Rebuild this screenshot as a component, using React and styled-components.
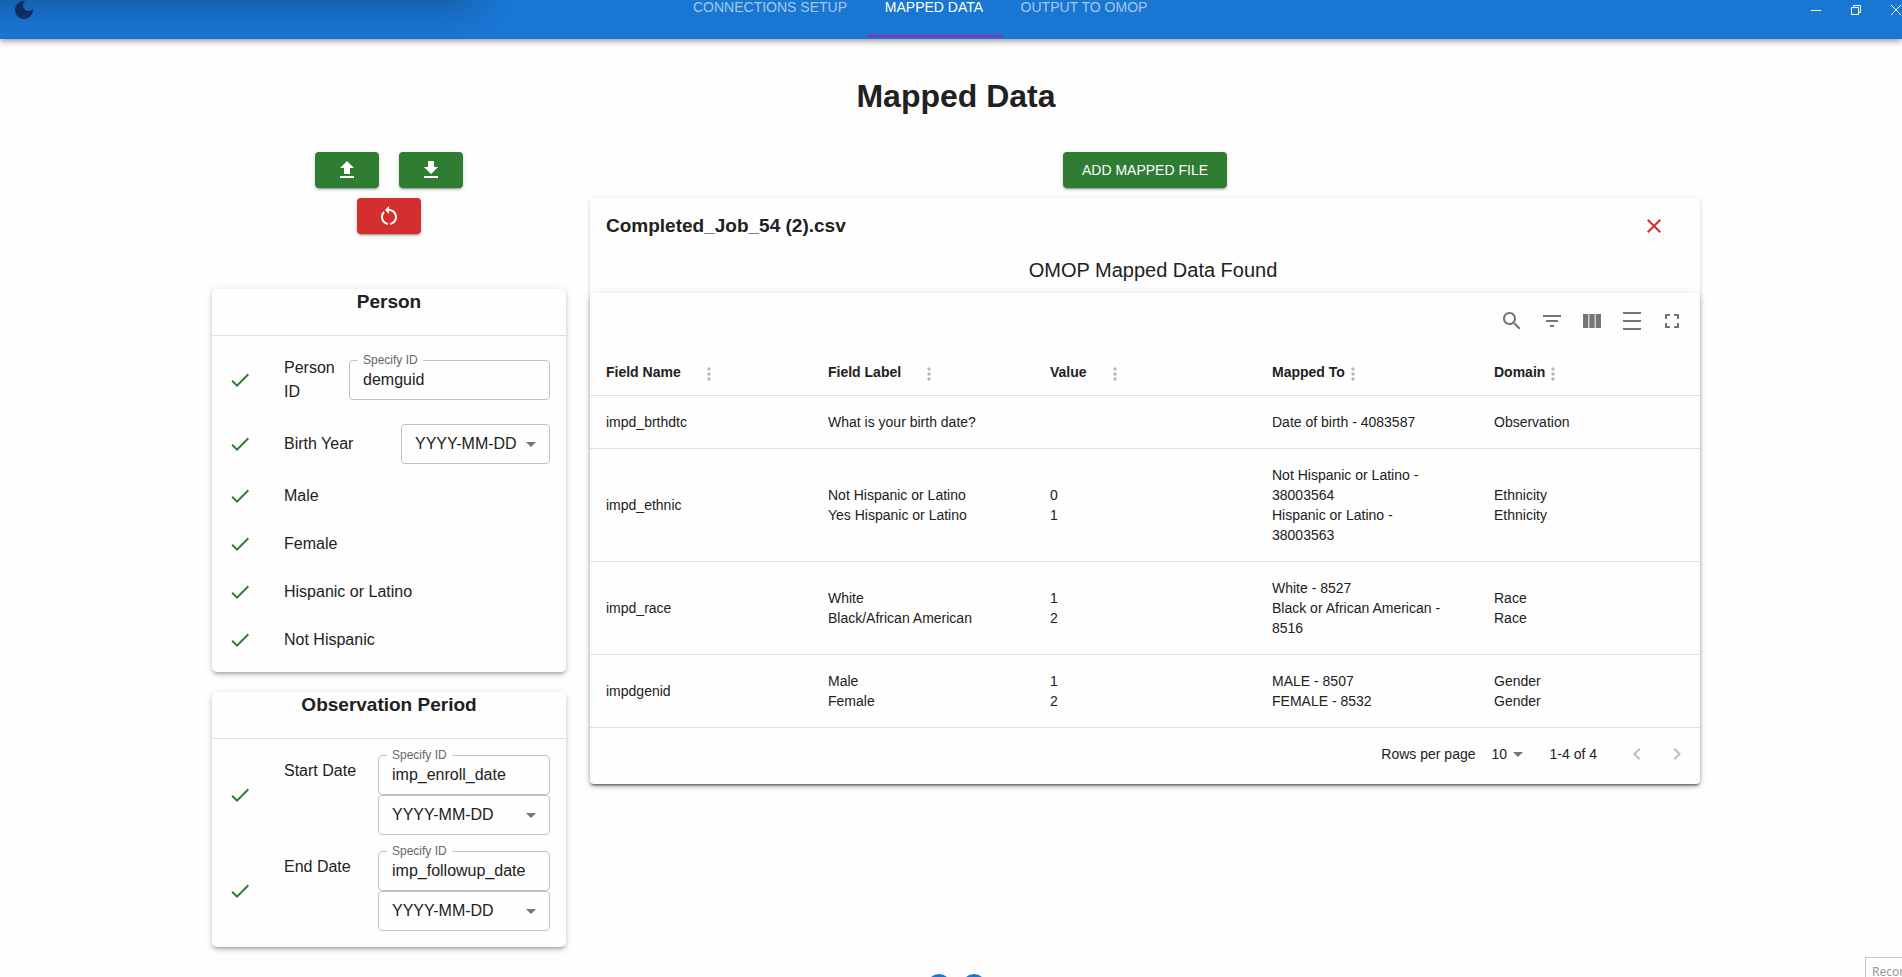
import React from 'react';
import styled, { createGlobalStyle, css } from 'styled-components';

const SURFACE = '#fefefe';
const TEXT = '#212121';
const LINE = '#dfdfdf';
const OUTLINE = '#c2c2c2';
const MUTED = '#757575';
const FONT = '"Liberation Sans", Arial, sans-serif';

const shadow = {
  low: '0 3px 1px -2px rgba(0,0,0,.2), 0 2px 2px 0 rgba(0,0,0,.14), 0 1px 5px 0 rgba(0,0,0,.12)',
  mid: '0 3px 3px -2px rgba(0,0,0,.2), 0 3px 4px 0 rgba(0,0,0,.14), 0 1px 8px 0 rgba(0,0,0,.12)',
  bar: '0 2px 4px -1px rgba(0,0,0,.2), 0 4px 5px 0 rgba(0,0,0,.14), 0 1px 10px 0 rgba(0,0,0,.12)',
};

const GlobalStyle = createGlobalStyle`
  *, *::before, *::after { box-sizing: border-box; }
  body { margin: 0; background: ${SURFACE}; color: ${TEXT}; font-family: ${FONT}; font-size: 16px; line-height: 24px; }
  button, input, select { font: inherit; color: inherit; margin: 0; }
  h1, h2, h3, p, ul { margin: 0; padding: 0; }
`;

/* ---------- icons ---------- */

const PATHS = {
  moon: 'M12 3c-4.97 0-9 4.03-9 9s4.03 9 9 9 9-4.03 9-9c0-.46-.04-.92-.1-1.36-.98 1.37-2.58 2.26-4.4 2.26-2.98 0-5.4-2.42-5.4-5.4 0-1.81.89-3.42 2.26-4.4-.44-.06-.9-.1-1.36-.1z',
  upload: 'M5 20h14v-2H5v2zm0-10h4v6h6v-6h4l-7-7-7 7z',
  download: 'M19 9h-4V3H9v6H5l7 7 7-7zM5 18v2h14v-2H5z',
  restart:
    'M12 5V2L8 6l4 4V7c3.31 0 6 2.69 6 6 0 2.97-2.17 5.43-5 5.91v2.02c3.95-.49 7-3.85 7-7.93 0-4.42-3.58-8-8-8zm-6 8c0-1.65.67-3.15 1.76-4.24L6.34 7.34C4.9 8.79 4 10.79 4 13c0 4.08 3.05 7.44 7 7.93v-2.02c-2.83-.48-5-2.94-5-5.91z',
  check: 'M9 16.17L4.83 12l-1.42 1.41L9 19 21 7l-1.41-1.41z',
  caret: 'M7 10l5 5 5-5z',
  close: 'M19 6.41L17.59 5 12 10.59 6.41 5 5 6.41 10.59 12 5 17.59 6.41 19 12 13.41 17.59 19 19 17.59 13.41 12z',
  search:
    'M15.5 14h-.79l-.28-.27C15.41 12.59 16 11.11 16 9.5 16 5.91 13.09 3 9.5 3S3 5.91 3 9.5 5.91 16 9.5 16c1.61 0 3.09-.59 4.23-1.57l.27.28v.79l5 4.99L20.49 19l-4.99-5zm-6 0C7.01 14 5 11.99 5 9.5S7.01 5 9.5 5 14 7.01 14 9.5 11.99 14 9.5 14z',
  filter: 'M10 18h4v-2h-4v2zM3 6v2h18V6H3zm3 7h12v-2H6v2z',
  columns: 'M14.67 5v14H9.33V5h5.34zm1 14H21V5h-5.33v14zm-7.34 0V5H3v14h5.33z',
  density: 'M3 3h18v2H3zm0 16h18v2H3zm0-8h18v2H3z',
  fullscreen: 'M7 14H5v5h5v-2H7v-3zm-2-4h2V7h3V5H5v5zm12 7h-3v2h5v-5h-2v3zM14 5v2h3v3h2V5h-5z',
  more: 'M12 8c1.1 0 2-.9 2-2s-.9-2-2-2-2 .9-2 2 .9 2 2 2zm0 2c-1.1 0-2 .9-2 2s.9 2 2 2 2-.9 2-2-.9-2-2-2zm0 6c-1.1 0-2 .9-2 2s.9 2 2 2 2-.9 2-2-.9-2-2-2z',
  left: 'M15.41 7.41L14 6l-6 6 6 6 1.41-1.41L10.83 12z',
  right: 'M10 6L8.59 7.41 13.17 12l-4.58 4.59L10 18l6-6z',
};

const Svg = styled.svg`
  display: block;
  flex: none;
  fill: currentColor;
`;

const Icon = ({ name, size = 24 }) => (
  <Svg width={size} height={size} viewBox="0 0 24 24" aria-hidden="true">
    <path d={PATHS[name]} />
  </Svg>
);

/* ---------- shell ---------- */

const Shell = styled.div`
  position: relative;
  height: 100vh;
  overflow: hidden;
`;

const AppBar = styled.header`
  position: relative;
  display: flex;
  align-items: flex-start;
  height: 39px;
  overflow: hidden;
  background: #1976d2;
  color: #fff;

  &::before {
    content: '';
    position: absolute;
    top: -30px;
    left: -40px;
    width: 514px;
    height: 30px;
    box-shadow: 0 2px 36px rgba(0, 0, 0, 0.34);
    pointer-events: none;
  }
`;

const BarShadow = styled.div`
  box-shadow: ${shadow.bar};
`;

const PlainButton = styled.button`
  display: flex;
  align-items: center;
  justify-content: center;
  padding: 0;
  border: 0;
  background: none;
  cursor: pointer;
`;

const ThemeButton = styled(PlainButton)`
  width: 44px;
  height: 20px;
  padding-left: 4px;
  color: #14336b;
`;

const Tabs = styled.nav`
  flex: 1;
  display: grid;
  grid-template-columns: 193px 135px 165px;
  justify-content: center;
`;

const Tab = styled.a`
  height: 37px;
  border-bottom: 2px solid ${(p) => (p.$active ? '#9c27b0' : 'transparent')};
  color: ${(p) => (p.$active ? '#fff' : 'rgba(255,255,255,.6)')};
  font-size: 14px;
  line-height: 14px;
  text-align: center;
  text-decoration: none;
  white-space: nowrap;
`;

const WindowControls = styled.div`
  display: flex;
  width: 106px;
  overflow: hidden;
`;

const WindowButton = styled(PlainButton)`
  flex: none;
  width: 40px;
  height: 20px;
`;

const Glyph = styled.svg`
  display: block;
  fill: none;
  stroke: #fff;
`;

/* ---------- page ---------- */

const Page = styled.main`
  max-width: 1498px;
  margin: 0 auto;
  padding: 37px 0 0 10px;
`;

const Title = styled.h1`
  margin-bottom: 36px;
  font-size: 32px;
  line-height: 40px;
  text-align: center;
`;

const Columns = styled.div`
  display: grid;
  grid-template-columns: 354px minmax(0, 1fr);
  gap: 24px;
  align-items: start;
`;

const ActionButton = styled.button`
  display: flex;
  align-items: center;
  justify-content: center;
  min-width: ${(p) => (p.$wide ? '164px' : '64px')};
  height: 36px;
  padding: 0 16px;
  border: 0;
  border-radius: 4px;
  background: ${(p) => (p.$danger ? '#d32f2f' : '#2e7d32')};
  box-shadow: ${shadow.low};
  color: #fff;
  font-size: 14px;
  cursor: pointer;
`;

const Actions = styled.div`
  display: flex;
  flex-wrap: wrap;
  justify-content: center;
  gap: 10px 20px;
  width: 168px;
  margin: 0 auto 55px;
`;

const Card = styled.section`
  margin-bottom: 20px;
  border-radius: 5px;
  background: ${SURFACE};
  box-shadow: ${shadow.mid};
`;

const CardTitle = styled.h2`
  height: 47px;
  border-bottom: 1px solid ${LINE};
  font-size: 19px;
  line-height: 26px;
  text-align: center;
`;

const List = styled.ul`
  padding: 8px 0;
  list-style: none;
`;

const Item = styled.li`
  display: flex;
  align-items: center;
  padding: 8px 16px;
`;

const Tick = styled.span`
  flex: none;
  width: 56px;
  color: #2e7d32;
`;

const ItemText = styled.span`
  flex: 1;
  min-width: 0;
  margin: 4px 0;
  ${(p) => p.$top && css`align-self: flex-start;`}
`;

const Controls = styled.div`
  flex: none;
  width: ${(p) => p.$width}px;
`;

const Field = styled.div`
  position: relative;
`;

const FieldLabel = styled.label`
  position: absolute;
  top: -8px;
  left: 9px;
  padding: 0 5px;
  background: ${SURFACE};
  color: #666;
  font-size: 12px;
  line-height: 16px;
`;

const outlined = css`
  display: block;
  width: 100%;
  height: 40px;
  border: 1px solid ${OUTLINE};
  border-radius: 4px;
  background: transparent;
`;

const TextInput = styled.input`
  ${outlined}
  padding: 0 13px;
`;

const SelectBox = styled.div`
  display: grid;
  align-items: center;

  > * {
    grid-area: 1 / 1;
  }

  > svg {
    justify-self: end;
    margin-right: 7px;
    color: ${MUTED};
    pointer-events: none;
  }
`;

const Select = styled.select`
  ${outlined}
  padding: 0 28px 0 13px;
  appearance: none;
`;

/* ---------- file panel ---------- */

const Upload = styled.div`
  display: flex;
  flex-direction: column;
  align-items: center;
  gap: 10px;
`;

const FilePanel = styled.section`
  width: 100%;
  border-radius: 4px;
  background: ${SURFACE};
  box-shadow: ${shadow.low};
`;

const FileHead = styled.header`
  display: flex;
  align-items: center;
  justify-content: space-between;
  height: 56px;
  padding: 0 34px 0 16px;
`;

const FileName = styled.h3`
  font-size: 19px;
`;

const RemoveButton = styled(PlainButton)`
  width: 24px;
  height: 24px;
  color: #d32f2f;
`;

const Found = styled.p`
  height: 39px;
  padding: 4px 0 0 16px;
  font-size: 20px;
  text-align: center;
`;

const TablePanel = styled.div`
  border-radius: 4px;
  box-shadow: ${shadow.mid};
`;

const Toolbar = styled.div`
  display: flex;
  align-items: center;
  justify-content: flex-end;
  height: 56px;
  padding-right: 8px;
  color: ${MUTED};
`;

const ToolButton = styled(PlainButton)`
  width: 40px;
  height: 40px;
  color: ${(p) => (p.disabled ? '#bdbdbd' : MUTED)};
`;

const Table = styled.table`
  width: 100%;
  border-collapse: separate;
  border-spacing: 0;
  table-layout: fixed;
  font-size: 14px;
  line-height: 20px;
`;

const Th = styled.th`
  height: 47px;
  padding: 0 16px;
  border-bottom: 1px solid ${LINE};
  text-align: left;
`;

const HeadCell = styled.div`
  display: flex;
  align-items: center;
  gap: ${(p) => (p.$sortable ? '20px' : '0')};
`;

const MoreButton = styled(PlainButton)`
  width: 16px;
  height: 20px;
  padding-top: 4px;
  color: #b8b8b8;
`;

const Td = styled.td`
  padding: 16px 24px 16px 16px;
  border-bottom: 1px solid ${LINE};
  vertical-align: middle;
`;

const Line = styled.div`
  min-height: 20px;
`;

const Pagination = styled.footer`
  display: flex;
  align-items: center;
  justify-content: flex-end;
  height: 56px;
  padding: 0 3px 4px 16px;
  font-size: 14px;
`;

const RowsLabel = styled.label`
  margin-right: 16px;
`;

const RowsSelect = styled(SelectBox)`
  width: 38px;
  margin-right: 20px;

  > svg {
    margin-right: 0;
  }
`;

const RowsChoice = styled.select`
  width: 38px;
  padding: 0;
  border: 0;
  background: transparent;
  appearance: none;
`;

const Range = styled.span`
  margin-right: 20px;
`;

const PageDots = styled.div`
  display: flex;
  justify-content: center;
  gap: 11px;
  margin-top: 7px;
`;

const Dot = styled.button`
  width: 24px;
  height: 24px;
  padding: 0;
  border: 0;
  border-radius: 50%;
  background: #1976d2;
`;

const Hint = styled.div`
  position: absolute;
  right: 0;
  bottom: 0;
  width: 37px;
  height: 20px;
  padding: 5px 0 0 6px;
  overflow: hidden;
  border: solid #c8c8c8;
  border-width: 1px 0 0 1px;
  background: ${SURFACE};
  color: #9a9a9a;
  font-family: "Noto Sans", sans-serif;
  font-size: 12px;
  line-height: 18px;
  white-space: nowrap;
`;

/* ---------- data ---------- */

const COLUMNS = [
  { label: 'Field Name', sortable: true },
  { label: 'Field Label', sortable: true },
  { label: 'Value', sortable: true },
  { label: 'Mapped To' },
  { label: 'Domain' },
];

const ROWS = [
  [['impd_brthdtc'], ['What is your birth date?'], [], ['Date of birth - 4083587'], ['Observation']],
  [
    ['impd_ethnic'],
    ['Not Hispanic or Latino', 'Yes Hispanic or Latino'],
    ['0', '1'],
    ['Not Hispanic or Latino - 38003564', 'Hispanic or Latino - 38003563'],
    ['Ethnicity', 'Ethnicity'],
  ],
  [
    ['impd_race'],
    ['White', 'Black/African American'],
    ['1', '2'],
    ['White - 8527', 'Black or African American - 8516'],
    ['Race', 'Race'],
  ],
  [['impdgenid'], ['Male', 'Female'], ['1', '2'], ['MALE - 8507', 'FEMALE - 8532'], ['Gender', 'Gender']],
];

const TOOLS = [
  ['search', 'Show/Hide search'],
  ['filter', 'Show/Hide filters'],
  ['columns', 'Show/Hide columns'],
  ['density', 'Toggle density'],
  ['fullscreen', 'Toggle full screen'],
];

/* ---------- parts ---------- */

const IdField = ({ id, value }) => (
  <Field>
    <TextInput id={id} defaultValue={value} />
    <FieldLabel htmlFor={id}>Specify ID</FieldLabel>
  </Field>
);

const FormatSelect = ({ label }) => (
  <SelectBox>
    <Select aria-label={label} defaultValue="YYYY-MM-DD">
      <option>YYYY-MM-DD</option>
    </Select>
    <Icon name="caret" />
  </SelectBox>
);

const CheckItem = ({ label, top, width, children }) => (
  <Item>
    <Tick>
      <Icon name="check" />
    </Tick>
    <ItemText $top={top}>{label}</ItemText>
    {children && <Controls $width={width}>{children}</Controls>}
  </Item>
);

export default function App() {
  return (
    <Shell>
      <GlobalStyle />
      <BarShadow>
        <AppBar>
          <ThemeButton aria-label="Dark mode">
            <Icon name="moon" />
          </ThemeButton>
          <Tabs>
            <Tab href="#connections">CONNECTIONS SETUP</Tab>
            <Tab href="#mapped" $active aria-current="page">MAPPED DATA</Tab>
            <Tab href="#output">OUTPUT TO OMOP</Tab>
          </Tabs>
          <WindowControls>
            <WindowButton aria-label="Minimize">
              <Glyph width="10" height="10" viewBox="0 0 10 10"><path d="M0 5.5h10" /></Glyph>
            </WindowButton>
            <WindowButton aria-label="Restore">
              <Glyph width="10" height="10" viewBox="0 0 10 10"><path d="M.5 2.5h7v7h-7zM2.5 2.5v-2h7v7h-2" /></Glyph>
            </WindowButton>
            <WindowButton aria-label="Close">
              <Glyph width="10" height="10" viewBox="0 0 10 10"><path d="M0 0l10 10M10 0L0 10" /></Glyph>
            </WindowButton>
          </WindowControls>
        </AppBar>
      </BarShadow>

      <Page>
        <Title>Mapped Data</Title>
        <Columns>
          <div>
            <Actions>
              <ActionButton aria-label="Upload"><Icon name="upload" /></ActionButton>
              <ActionButton aria-label="Download"><Icon name="download" /></ActionButton>
              <ActionButton $danger aria-label="Reset"><Icon name="restart" /></ActionButton>
            </Actions>

            <Card>
              <CardTitle>Person</CardTitle>
              <List>
                <CheckItem label="Person ID" width={201}>
                  <IdField id="person-id" value="demguid" />
                </CheckItem>
                <CheckItem label="Birth Year" width={149}>
                  <FormatSelect label="Birth year format" />
                </CheckItem>
                <CheckItem label="Male" />
                <CheckItem label="Female" />
                <CheckItem label="Hispanic or Latino" />
                <CheckItem label="Not Hispanic" />
              </List>
            </Card>

            <Card>
              <CardTitle>Observation Period</CardTitle>
              <List>
                <CheckItem label="Start Date" top width={172}>
                  <IdField id="start-id" value="imp_enroll_date" />
                  <FormatSelect label="Start date format" />
                </CheckItem>
                <CheckItem label="End Date" top width={172}>
                  <IdField id="end-id" value="imp_followup_date" />
                  <FormatSelect label="End date format" />
                </CheckItem>
              </List>
            </Card>
          </div>

          <Upload>
            <ActionButton $wide>ADD MAPPED FILE</ActionButton>
            <FilePanel>
              <FileHead>
                <FileName>Completed_Job_54 (2).csv</FileName>
                <RemoveButton aria-label="Remove file"><Icon name="close" /></RemoveButton>
              </FileHead>
              <Found>OMOP Mapped Data Found</Found>
              <TablePanel>
                <Toolbar>
                  {TOOLS.map(([name, label]) => (
                    <ToolButton key={name} aria-label={label}><Icon name={name} /></ToolButton>
                  ))}
                </Toolbar>
                <Table>
                  <thead>
                    <tr>
                      {COLUMNS.map(({ label, sortable }) => (
                        <Th key={label} scope="col">
                          <HeadCell $sortable={sortable}>
                            {label}
                            <MoreButton aria-label={`${label} column actions`}><Icon name="more" size={20} /></MoreButton>
                          </HeadCell>
                        </Th>
                      ))}
                    </tr>
                  </thead>
                  <tbody>
                    {ROWS.map((row) => (
                      <tr key={row[0][0]}>
                        {row.map((lines, i) => (
                          <Td key={COLUMNS[i].label}>
                            {lines.map((line, n) => <Line key={n}>{line}</Line>)}
                          </Td>
                        ))}
                      </tr>
                    ))}
                  </tbody>
                </Table>
                <Pagination>
                  <RowsLabel htmlFor="rows">Rows per page</RowsLabel>
                  <RowsSelect>
                    <RowsChoice id="rows" defaultValue="10">
                      <option>10</option>
                      <option>25</option>
                    </RowsChoice>
                    <Icon name="caret" />
                  </RowsSelect>
                  <Range>1-4 of 4</Range>
                  <ToolButton disabled aria-label="Previous page"><Icon name="left" /></ToolButton>
                  <ToolButton disabled aria-label="Next page"><Icon name="right" /></ToolButton>
                </Pagination>
              </TablePanel>
            </FilePanel>
          </Upload>
        </Columns>
        <PageDots>
          <Dot aria-label="Previous step" />
          <Dot aria-label="Next step" />
        </PageDots>
      </Page>
      <Hint>Record</Hint>
    </Shell>
  );
}
